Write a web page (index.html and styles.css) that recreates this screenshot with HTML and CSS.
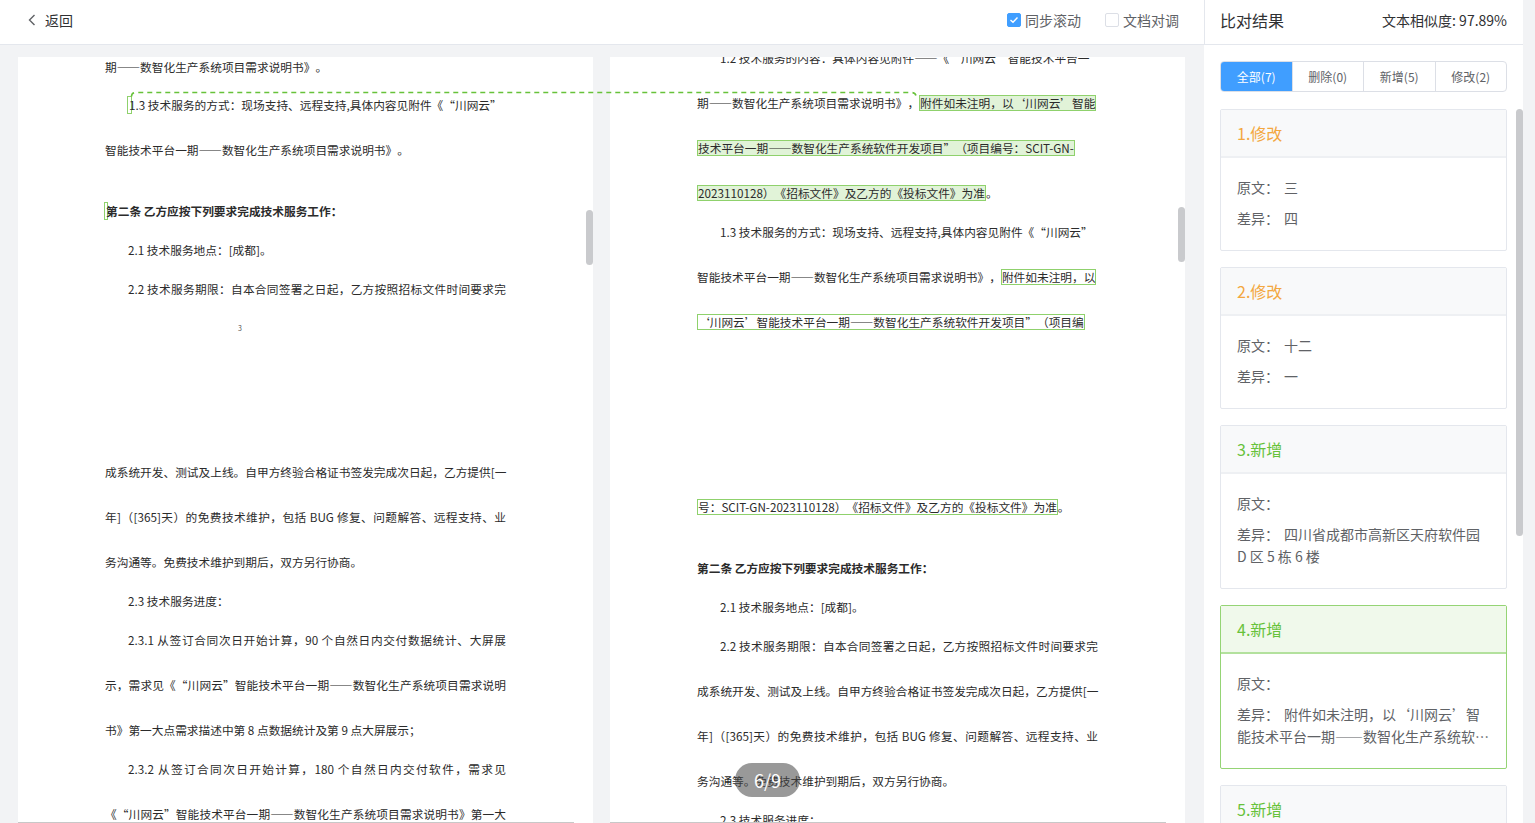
FILE: index.html
```html
<!DOCTYPE html>
<html lang="zh-CN">
<head>
<meta charset="utf-8">
<title>比对结果</title>
<link rel="stylesheet" href="styles.css">
</head>
<body>
<div class="app">
  <div class="left-col">
    <header class="top-bar">
      <div class="back">
        <svg class="chev" width="8" height="12" viewBox="0 0 8 12"><path d="M6.5 1 L1.5 6 L6.5 11" fill="none" stroke="#606266" stroke-width="1.4"/></svg>
        <span>返回</span>
      </div>
      <div class="opts">
        <label class="chk"><span class="box on"><svg width="10" height="8" viewBox="0 0 10 8"><path d="M1.5 4 L4 6.3 L8.5 1.5" fill="none" stroke="#fff" stroke-width="1.4"/></svg></span>同步滚动</label>
        <label class="chk"><span class="box"></span>文档对调</label>
      </div>
    </header>

    <div class="docs">
      <div class="pane">
        <div class="page">
          <div class="ln t2">期——数智化生产系统项目需求说明书》。</div>
          <div class="ln g38 ind"><span class="mk"></span>1.3 技术服务的方式：现场支持、远程支持,具体内容见附件《“川网云”</div>
          <div class="ln a">智能技术平台一期——数智化生产系统项目需求说明书》。</div>
          <div class="ln g61 bold"><span class="mk mk2"></span>第二条 乙方应按下列要求完成技术服务工作：</div>
          <div class="ln b ind">2.1 技术服务地点：[成都]。</div>
          <div class="ln b ind full">2.2 技术服务期限：自本合同签署之日起，乙方按照招标文件时间要求完</div>
          <div class="ln b pnum">3</div>
          <div class="ln g144 full">成系统开发、测试及上线。自甲方终验合格证书签发完成次日起，乙方提供[一</div>
          <div class="ln a full">年]（[365]天）的免费技术维护，包括 BUG 修复、问题解答、远程支持、业</div>
          <div class="ln a">务沟通等。免费技术维护到期后，双方另行协商。</div>
          <div class="ln b ind">2.3 技术服务进度：</div>
          <div class="ln b ind full">2.3.1 从签订合同次日开始计算，90 个自然日内交付数据统计、大屏展</div>
          <div class="ln a full">示，需求见《“川网云”智能技术平台一期——数智化生产系统项目需求说明</div>
          <div class="ln a">书》第一大点需求描述中第 8 点数据统计及第 9 点大屏展示；</div>
          <div class="ln b ind full">2.3.2 从签订合同次日开始计算，180 个自然日内交付软件，需求见</div>
          <div class="ln a full">《“川网云”智能技术平台一期——数智化生产系统项目需求说明书》第一大</div>
        </div>
        <div class="vthumb left-thumb"></div>
        <div class="hbar"></div>
      </div>

      <div class="pane">
        <div class="page">
          <div class="ln tm7 ind">1.2 技术服务的内容：具体内容见附件——《“川网云”智能技术平台一</div>
          <div class="ln a">期——数智化生产系统项目需求说明书》，<span class="hl fill">附件如未注明，以‘川网云’智能</span></div>
          <div class="ln a"><span class="hl fill">技术平台一期——数智化生产系统软件开发项目”（项目编号：SCIT-GN-</span></div>
          <div class="ln a"><span class="hl fill">2023110128）《招标文件》及乙方的《投标文件》为准</span>。</div>
          <div class="ln b ind">1.3 技术服务的方式：现场支持、远程支持,具体内容见附件《“川网云”</div>
          <div class="ln a">智能技术平台一期——数智化生产系统项目需求说明书》，<span class="hl">附件如未注明，以</span></div>
          <div class="ln a"><span class="hl">‘川网云’智能技术平台一期——数智化生产系统软件开发项目”（项目编</span></div>
          <div class="ln g185"><span class="hl">号：SCIT-GN-2023110128）《招标文件》及乙方的《投标文件》为准</span>。</div>
          <div class="ln g61 bold">第二条 乙方应按下列要求完成技术服务工作：</div>
          <div class="ln b ind">2.1 技术服务地点：[成都]。</div>
          <div class="ln b ind full">2.2 技术服务期限：自本合同签署之日起，乙方按照招标文件时间要求完</div>
          <div class="ln a full">成系统开发、测试及上线。自甲方终验合格证书签发完成次日起，乙方提供[一</div>
          <div class="ln a full">年]（[365]天）的免费技术维护，包括 BUG 修复、问题解答、远程支持、业</div>
          <div class="ln a">务沟通等。免费技术维护到期后，双方另行协商。</div>
          <div class="ln b ind">2.3 技术服务进度：</div>
        </div>
        <div class="pager">6/9</div>
        <div class="vthumb mid-thumb"></div>
        <div class="hbar"></div>
      </div>
    </div>

    <svg class="link" width="1204" height="120" viewBox="0 0 1204 120">
      <path d="M131.5 96.5 Q131.5 92.5 136 92.5 L911 92.5 Q916 92.5 916 96.5" fill="none" stroke="#67c23a" stroke-width="1.6" stroke-dasharray="5 4"/>
    </svg>
  </div>

  <aside class="right-col">
    <header class="r-head">
      <span class="r-title">比对结果</span>
      <span class="sim">文本相似度: 97.89%</span>
    </header>
    <div class="tabs">
      <div class="tab on">全部(7)</div>
      <div class="tab">删除(0)</div>
      <div class="tab">新增(5)</div>
      <div class="tab">修改(2)</div>
    </div>
    <div class="cards">
      <div class="card">
        <div class="card-h mod">1.修改</div>
        <div class="card-b">
          <div class="row">原文：<span class="val">三</span></div>
          <div class="row">差异：<span class="val">四</span></div>
        </div>
      </div>
      <div class="card">
        <div class="card-h mod">2.修改</div>
        <div class="card-b">
          <div class="row">原文：<span class="val">十二</span></div>
          <div class="row">差异：<span class="val">一</span></div>
        </div>
      </div>
      <div class="card">
        <div class="card-h add">3.新增</div>
        <div class="card-b">
          <div class="row">原文：</div>
          <div class="row">差异：<span class="val">四川省成都市高新区天府软件园<br>D 区 5 栋 6 楼</span></div>
        </div>
      </div>
      <div class="card active">
        <div class="card-h add">4.新增</div>
        <div class="card-b">
          <div class="row">原文：</div>
          <div class="row clamp">差异：<span class="val">附件如未注明，以‘川网云’智能技术平台一期——数智化生产系统软件开发项目”（项目编号：SCIT-GN-2023110128）《招标文件》及乙方的《投标文件》为准</span></div>
        </div>
      </div>
      <div class="card">
        <div class="card-h add">5.新增</div>
        <div class="card-b">
          <div class="row">原文：</div>
          <div class="row">差异：<span class="val">十</span></div>
        </div>
      </div>
    </div>
    <div class="rthumb"></div>
  </aside>

  <div class="strip"></div>
</div>
</body>
</html>
```

FILE: styles.css
```css
html, body {
  margin: 0;
  padding: 0;
  overflow: hidden;
  background: #f2f3f5;
}

.app {
  display: flex;
  width: 1535px;
  height: 823px;
  overflow: hidden;
  font-family: "Noto Sans CJK SC", "Noto Sans", sans-serif;
  text-spacing-trim: space-all;
}

/* ---------- left column ---------- */
.left-col {
  width: 1204px;
  flex-shrink: 0;
  position: relative;
  display: flex;
  flex-direction: column;
}

.top-bar {
  height: 40px;
  padding: 0 25px 4px 28px;
  border-bottom: 1px solid #e4e7ed;
  background: #fff;
  display: flex;
  align-items: center;
  justify-content: space-between;
}

.back {
  display: flex;
  align-items: center;
  gap: 9px;
  font-size: 14px;
  color: #303133;
}

.chev {
  display: block;
}

.opts {
  display: flex;
  gap: 24px;
}

.chk {
  display: flex;
  align-items: center;
  font-size: 14px;
  color: #606266;
}

.box {
  width: 14px;
  height: 14px;
  box-sizing: border-box;
  border: 1px solid #dcdfe6;
  border-radius: 2px;
  margin-right: 4px;
  background: #fff;
  display: flex;
  align-items: center;
  justify-content: center;
}

.box.on {
  background: #409eff;
  border-color: #409eff;
}

.docs {
  flex: 1;
  display: flex;
  gap: 17px;
  padding: 12px 0 0 18px;
  background: #f2f3f5;
}

.pane {
  width: 575px;
  height: 766px;
  flex-shrink: 0;
  background: #fff;
  position: relative;
  overflow: hidden;
}

.page {
  padding-left: 87px;
  width: 401px;
  color: #2b2b2b;
  font-size: 11.7px;
}

.ln {
  height: 16px;
  line-height: 16px;
  white-space: nowrap;
}

.ind { padding-left: 23px; }
.bold { font-weight: 700; }
.full { text-align: justify; text-align-last: justify; }

.t2 { margin-top: 2px; }
.tm7 { margin-top: -7px; }
.a { margin-top: 29px; }
.b { margin-top: 23px; }
.g38 { margin-top: 22px; }
.g61 { margin-top: 45px; }
.g144 { margin-top: 128px; }
.g185 { margin-top: 169px; }

.pnum {
  padding-left: 133px;
  font-size: 7px;
  color: #555;
}

.mk {
  display: inline-block;
  width: 5px;
  height: 18px;
  box-sizing: border-box;
  border: 1px solid #8fd16c;
  vertical-align: top;
  margin: -1px -3px -3px -1px;
}

.mk2 {
  width: 4px;
  margin-right: -2px;
}

.hl {
  display: inline-block;
  height: 16px;
  line-height: 14px;
  box-sizing: border-box;
  border: 1px solid #8fd16c;
  vertical-align: top;
}

.hl.fill {
  background: #e1f3d8;
}

.vthumb {
  position: absolute;
  right: 0;
  width: 7px;
  height: 55px;
  border-radius: 4px;
  background: #c9cacd;
}

.left-thumb { top: 153px; }
.mid-thumb { top: 150px; }

.hbar {
  position: absolute;
  left: 0;
  bottom: 0;
  width: calc(100% - 19px);
  height: 1px;
  background: #c8c8c8;
}

.pager {
  position: absolute;
  left: 125px;
  top: 706px;
  width: 65px;
  height: 34px;
  border-radius: 17px;
  background: rgba(70, 70, 70, 0.55);
  color: #fff;
  font-size: 18px;
  display: flex;
  align-items: center;
  justify-content: center;
}

.link {
  position: absolute;
  top: 0;
  left: 0;
  pointer-events: none;
}

/* ---------- right column ---------- */
.right-col {
  width: 319px;
  flex-shrink: 0;
  background: #fff;
  position: relative;
  overflow: hidden;
}

.r-head {
  height: 40px;
  padding: 0 16px 4px 15px;
  border-left: 1px solid #e4e7ed;
  border-bottom: 1px solid #e4e7ed;
  display: flex;
  align-items: center;
  justify-content: space-between;
}

.r-title {
  font-size: 16px;
  color: #303133;
}

.sim {
  font-size: 14px;
  color: #303133;
}

.tabs {
  display: flex;
  margin: 16px 16px 0 16px;
  height: 31px;
  box-sizing: border-box;
  border: 1px solid #dcdfe6;
  border-radius: 4px;
  overflow: hidden;
}

.tab {
  flex: 1;
  display: flex;
  align-items: center;
  justify-content: center;
  font-size: 12px;
  color: #606266;
  border-left: 1px solid #dcdfe6;
}

.tab:first-child { border-left: none; }

.tab.on {
  background: #409eff;
  color: #fff;
}

.cards {
  margin: 17px 16px 0 16px;
  display: flex;
  flex-direction: column;
  gap: 16px;
}

.card {
  border: 1px solid #e4e7ed;
  border-radius: 2px;
  background: #fff;
  flex-shrink: 0;
}

.card-h {
  height: 46px;
  border-bottom: 2px solid #eef0f3;
  background: #f8f9fa;
  display: flex;
  align-items: center;
  padding-left: 16px;
  font-size: 16px;
}

.card-h.mod { color: #f3a73f; }
.card-h.add { color: #67c23a; }

.card.active { border-color: #95d475; }
.card.active .card-h {
  background: #f0f9eb;
  border-bottom-color: #b3e19d;
}

.card-b {
  padding: 18px 16px 21px;
  font-size: 14px;
  color: #606266;
}

.row { line-height: 22px; }
.row + .row { margin-top: 9px; }

.val { margin-left: 5px; }

.clamp {
  display: -webkit-box;
  -webkit-line-clamp: 2;
  -webkit-box-orient: vertical;
  overflow: hidden;
}

.rthumb {
  position: absolute;
  right: 0;
  top: 109px;
  width: 7px;
  height: 427px;
  border-radius: 4px;
  background: #c9cacd;
}

.strip {
  width: 12px;
  flex-shrink: 0;
  background: #f2f3f5;
}
```
